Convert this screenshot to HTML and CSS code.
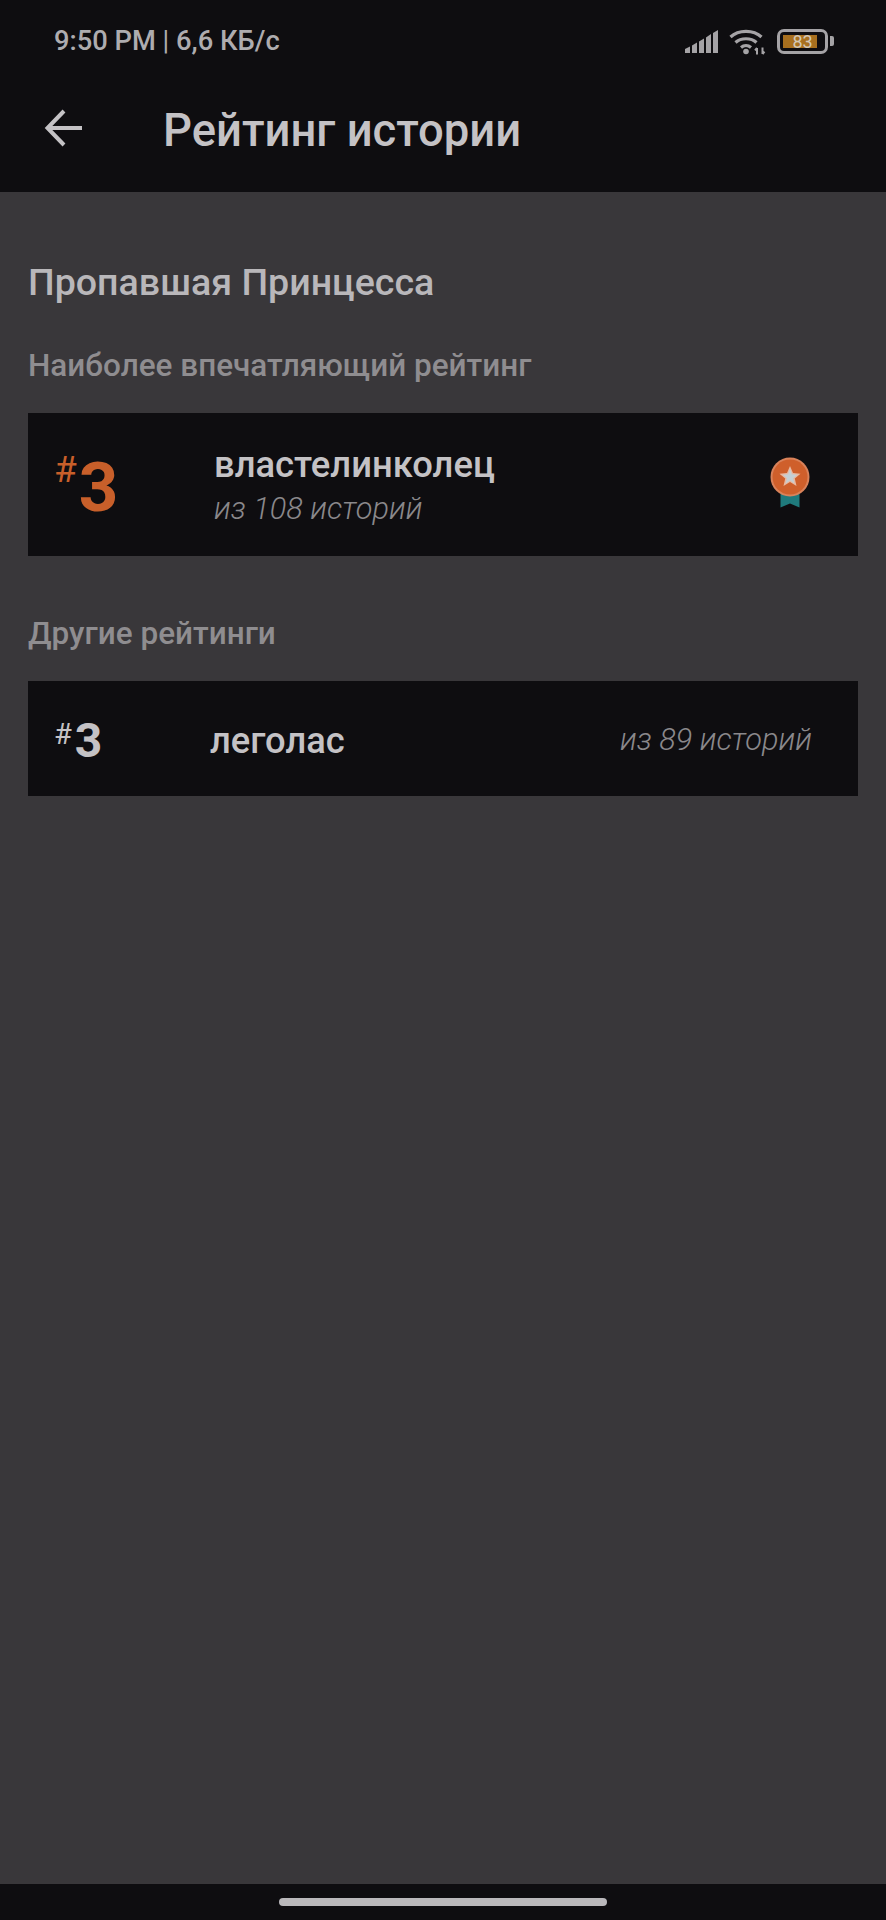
FILE: index.html
```html
<!DOCTYPE html>
<html lang="ru">
<head>
  <meta charset="UTF-8" />
  <meta name="viewport" content="width=device-width, initial-scale=1.0"/>
  <title>Рейтинг истории</title>
  <link rel="stylesheet" href="styles.css">
</head>
<body>
  <div class="screen">
    <header class="top">
      <div class="status">
        <div class="status-text">9:50 PM <span class="status-sep">|</span> 6,6 КБ/с</div>
        <div class="status-icons">
          <svg class="signal" width="33" height="25" viewBox="0 0 33 25">
            <path d="M0 20 L5 17.500 V24 H0 Z" />
            <path d="M7 16.500 L12 13.500 V24 H7 Z" />
            <path d="M14 12.500 L19 9.500 V24 H14 Z" />
            <path d="M21 8.500 L26 5 V24 H21 Z" />
            <path d="M28 4 L33 1 V24 H28 Z" />
          </svg>
          <svg class="wifi" width="37" height="27" viewBox="0 0 37 27">
            <path d="M1.500 9 C9.500 1.500 24.500 1.500 32.500 9" />
            <path d="M6.500 14.500 C12 9.500 22 9.500 27.500 14.500" />
            <path d="M12 19.500 C15 17 19 17 22 19.500" />
            <circle cx="17" cy="23.500" r="2.800" />
            <path class="wifi-arrows" d="M28 26.500 V20 M28 20 l-2 2.300 M33.500 19.500 V26 M33.500 26 l2 -2.300" />
          </svg>
          <div class="battery">
            <div class="battery-body">
              <div class="battery-fill"></div>
              <span class="battery-num">83</span>
            </div>
            <div class="battery-cap"></div>
          </div>
        </div>
      </div>
      <div class="toolbar">
        <svg class="back" width="40" height="40" viewBox="0 0 40 40">
          <path d="M38 20 H4 M20 3 L3.500 20 L20 37" />
        </svg>
        <h1 class="title">Рейтинг истории</h1>
      </div>
    </header>

    <main class="content">
      <h2 class="story-name">Пропавшая Принцесса</h2>

      <h3 class="section-label">Наиболее впечатляющий рейтинг</h3>
      <div class="card card-top">
        <div class="rank rank-top"><span class="hash">#</span><span class="num">3</span></div>
        <div class="card-info">
          <div class="tag tag-top">властелинколец</div>
          <div class="count">из 108 историй</div>
        </div>
        <svg class="medal" width="42" height="52" viewBox="0 0 42 52">
          <path d="M11.500 32 H30.500 V50.500 L21 46.500 L11.500 50.500 Z" fill="#1f7a7c" />
          <circle cx="21" cy="20" r="19.500" fill="#d9825a" />
          <circle cx="21" cy="20" r="17.500" fill="#cf5f2b" />
          <path d="M21 9 L24 16 L31.500 16.700 L25.800 21.600 L27.500 29 L21 25.100 L14.500 29 L16.200 21.600 L10.500 16.700 L18 16 Z" fill="#e8b9a2" />
          <path d="M21 12 L23 17.300 L28.300 17.800 L24.200 21.200 L25.400 26.400 L21 23.600 L16.600 26.400 L17.800 21.200 L13.700 17.800 L19 17.300 Z" fill="#c4cfd4" />
        </svg>
      </div>

      <h3 class="section-label section-other">Другие рейтинги</h3>
      <div class="card card-other">
        <div class="rank rank-other"><span class="hash">#</span><span class="num">3</span></div>
        <div class="tag tag-other">леголас</div>
        <div class="count count-other">из 89 историй</div>
      </div>
    </main>

    <footer class="nav-bar">
      <div class="home-pill"></div>
    </footer>
  </div>
</body>
</html>
```

FILE: styles.css
```css
* {
  box-sizing: border-box;
}

html, body {
  margin: 0;
  padding: 0;
  height: 100%;
}

body {
  background-color: #39373a;
  color: #c4c2c5;
  font-family: Roboto, "Noto Sans", sans-serif;
  overflow: hidden;
}

.screen {
  display: flex;
  flex-direction: column;
  height: 1920px;
}

.top {
  background-color: #0e0d10;
  height: 192px;
  flex: none;
}

.status {
  display: flex;
  justify-content: space-between;
  align-items: center;
  height: 82px;
  padding: 0 52px 0 54px;
}

.status-text {
  font-size: 27.3px;
  font-weight: 500;
  color: #aeacaf;
}

.status-sep {
  font-weight: 400;
}

.status-icons {
  display: flex;
  align-items: center;
  gap: 11px;
}

.signal {
  fill: #a5a3a6;
}

.wifi {
  fill: none;
  stroke: #a5a3a6;
  stroke-width: 3.2;
}

.wifi circle {
  fill: #a5a3a6;
  stroke: none;
}

.wifi-arrows {
  stroke-width: 2;
}

.battery {
  display: flex;
  align-items: center;
  gap: 2px;
}

.battery-body {
  position: relative;
  width: 51px;
  height: 25px;
  border: 3px solid #a5a3a6;
  border-radius: 7px;
  padding: 3px;
}

.battery-fill {
  height: 100%;
  width: 88%;
  background-color: #a8701f;
}

.battery-num {
  position: absolute;
  top: 0;
  left: 0;
  right: 0;
  bottom: 0;
  display: flex;
  justify-content: center;
  align-items: center;
  font-size: 18px;
  color: #d2c8b8;
}

.battery-cap {
  width: 4px;
  height: 10px;
  border-radius: 0 2px 2px 0;
  background-color: #a5a3a6;
}

.toolbar {
  display: flex;
  align-items: center;
  height: 110px;
  padding: 0 0 14px 44px;
}

.back {
  fill: none;
  stroke: #c4c2c5;
  stroke-width: 4;
  flex: none;
  margin-bottom: 4px;
}

.title {
  margin: 0 0 0 79px;
  font-size: 45.4px;
  font-weight: 500;
  color: #c4c2c5;
}

.content {
  flex: 1;
  padding: 0 28px;
}

.story-name {
  margin: 68px 0 0;
  font-size: 37.6px;
  line-height: 44px;
  font-weight: 500;
  color: #b9b7ba;
}

.section-label {
  margin: 42px 0 0;
  font-size: 31.5px;
  line-height: 40px;
  font-weight: 500;
  color: #8f8d90;
}

.section-other {
  margin-top: 58px;
}

.card {
  display: flex;
  align-items: center;
  background-color: #0e0d10;
  margin-top: 27px;
}

.card-top {
  height: 143px;
  padding: 0 47px 0 26px;
}

.card-other {
  height: 115px;
  padding: 0 46px 0 26px;
}

.rank {
  display: flex;
  align-items: flex-start;
  flex: none;
  font-weight: 700;
}

.rank-top {
  width: 160px;
  color: #c85f2a;
}

.rank-top .hash {
  font-size: 37px;
  line-height: 40px;
  font-weight: 400;
  margin-top: 5px;
}

.rank-top .num {
  font-size: 69px;
  line-height: 72px;
  margin-left: 2px;
  margin-top: 7px;
}

.rank-other {
  width: 156px;
  color: #c4c2c5;
}

.rank-other .hash {
  font-size: 29px;
  line-height: 30px;
  font-weight: 400;
  margin-top: 10px;
  margin-right: 3px;
}

.rank-other .num {
  font-size: 48px;
  line-height: 56px;
  margin-top: 4px;
}

.card-info {
  flex: 1;
  display: flex;
  flex-direction: column;
  margin-top: 2px;
}

.tag {
  font-weight: 500;
  color: #c4c2c5;
}

.tag-top {
  font-size: 36.4px;
  line-height: 42px;
}

.tag-other {
  flex: 1;
  font-size: 36.3px;
  line-height: 40px;
  margin-top: 4px;
}

.count {
  font-size: 30.7px;
  line-height: 36px;
  font-weight: 300;
  font-style: italic;
  color: #8a888b;
  margin-top: 5px;
}

.medal {
  flex: none;
  margin-top: -3px;
}

.count-other {
  margin-top: 2px;
}

.nav-bar {
  flex: none;
  display: flex;
  justify-content: center;
  height: 36px;
  padding-top: 14px;
  background-color: #0e0d10;
}

.home-pill {
  width: 328px;
  height: 8px;
  border-radius: 4px;
  background-color: #bab8bb;
}
```
